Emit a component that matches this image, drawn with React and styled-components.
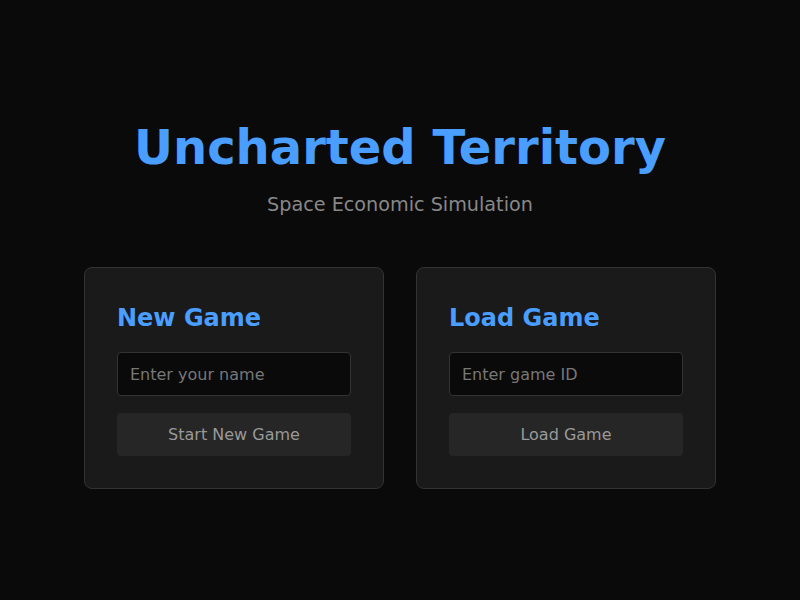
import React, { useState } from 'react'
import styled, { createGlobalStyle } from 'styled-components'

const GlobalStyle = createGlobalStyle`
  html, body {
    margin: 0;
    padding: 0;
    background: #0a0a0a;
    font-family: "DejaVu Sans", sans-serif;
  }
`

function GameCard({ title, placeholder, action, value, onChange }) {
  return (
    <Card>
      <CardTitle>{title}</CardTitle>
      <Input placeholder={placeholder} value={value} onChange={e => onChange(e.target.value)} />
      <Button>{action}</Button>
    </Card>
  )
}

function App() {
  const [name, setName] = useState('')
  const [gameId, setGameId] = useState('')
  return (
    <Page>
      <GlobalStyle />
      <Title>Uncharted Territory</Title>
      <Subtitle>Space Economic Simulation</Subtitle>
      <Cards>
        <GameCard title="New Game" placeholder="Enter your name" action="Start New Game" value={name} onChange={setName} />
        <GameCard title="Load Game" placeholder="Enter game ID" action="Load Game" value={gameId} onChange={setGameId} />
      </Cards>
    </Page>
  )
}

export default App

const Page = styled.div`
    min-height: 600px;
    box-sizing: border-box;
    padding-top: 119px;
    display: flex;
    flex-direction: column;
    align-items: center;
    background: #0a0a0a;
`
const Title = styled.h1`
    margin: 0;
    font-size: 48px;
    line-height: 56px;
    font-weight: bold;
    color: #4a9eff;
`
const Subtitle = styled.p`
    margin: 18px 0 0;
    font-size: 19.2px;
    line-height: 24px;
    color: #888;
`
const Cards = styled.div`
    display: flex;
    gap: 32px;
    margin-top: 50px;
`
const Card = styled.div`
    width: 300px;
    box-sizing: border-box;
    padding: 32px;
    background: #1a1a1a;
    border: 1px solid #333;
    border-radius: 8px;
    display: flex;
    flex-direction: column;
`
const CardTitle = styled.h2`
    margin: 0 0 16px;
    font-size: 24px;
    line-height: 36px;
    font-weight: bold;
    color: #4a9eff;
`
const Input = styled.input`
    height: 44px;
    box-sizing: border-box;
    padding: 0 12px;
    background: #0a0a0a;
    border: 1px solid #333;
    border-radius: 4px;
    color: #ddd;
    font-family: "DejaVu Sans", sans-serif;
    font-size: 16px;
    outline: none;
    &::placeholder{
        color: #777;
    }
`
const Button = styled.button`
    margin-top: 17px;
    height: 43px;
    background: #262626;
    border: none;
    border-radius: 4px;
    color: #999;
    font-family: "DejaVu Sans", sans-serif;
    font-size: 16px;
    cursor: pointer;
`
